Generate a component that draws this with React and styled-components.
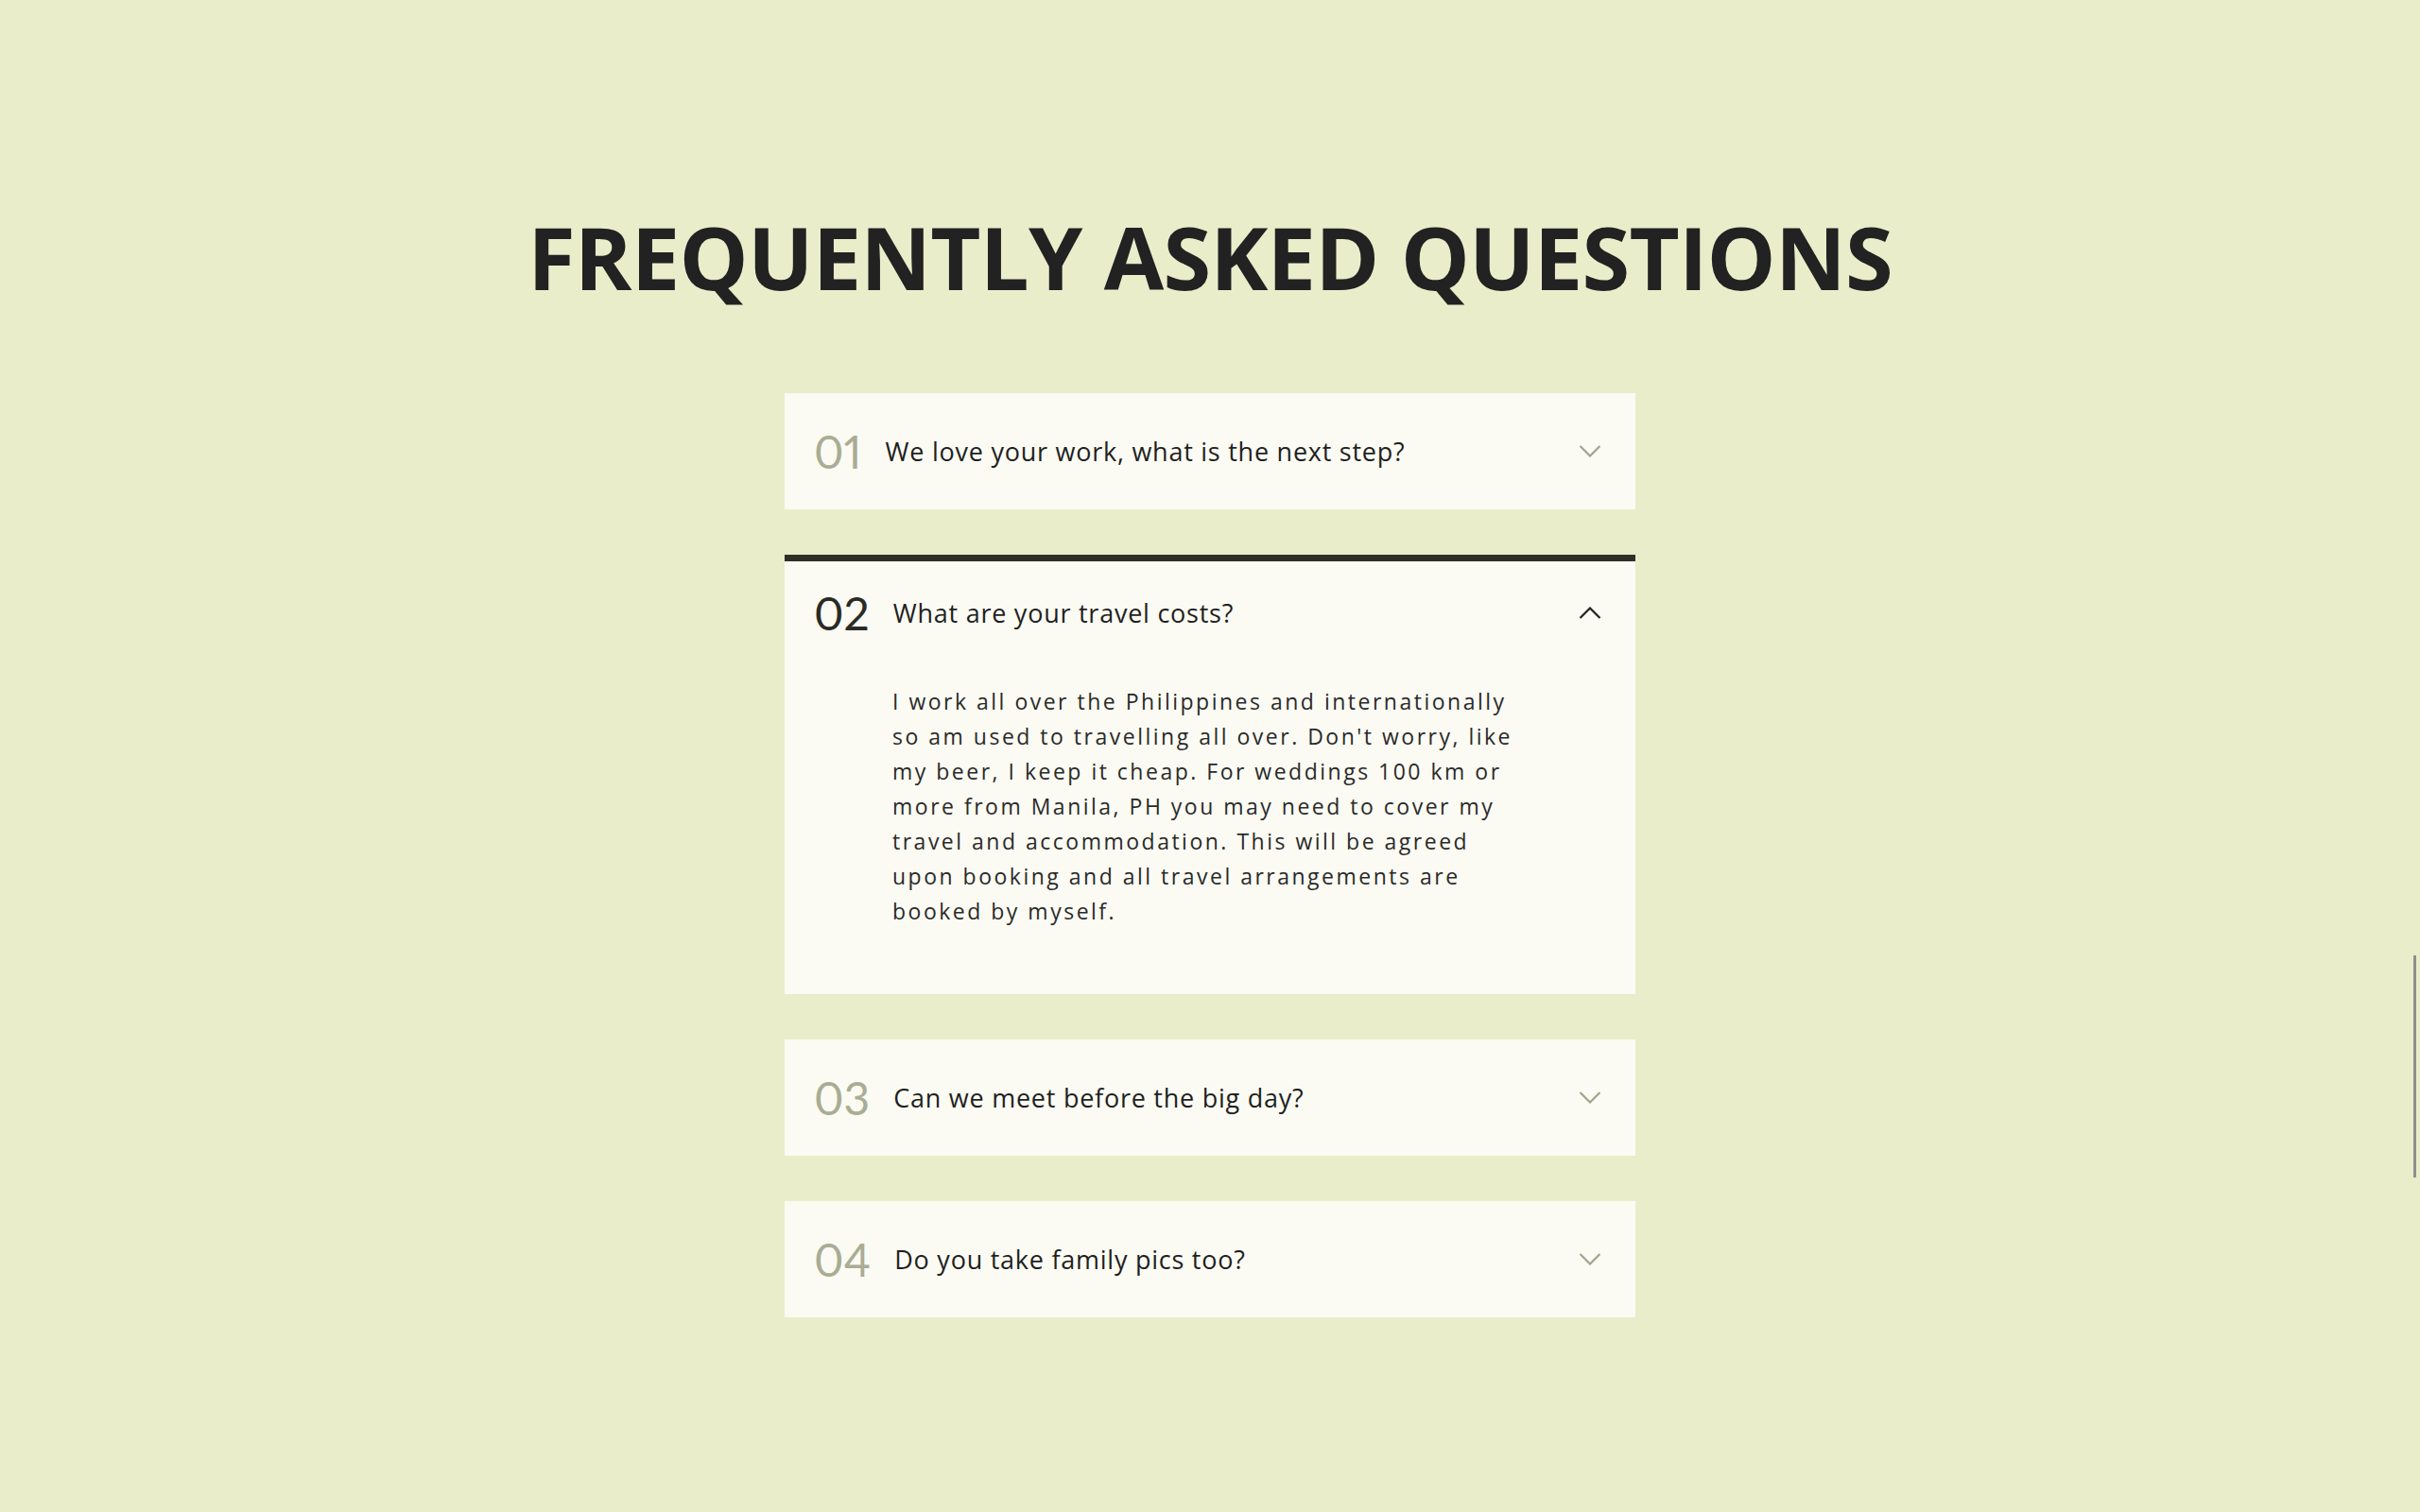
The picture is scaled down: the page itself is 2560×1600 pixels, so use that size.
import React, { useState } from 'react';
import styled, { createGlobalStyle } from 'styled-components';

const GlobalStyle = createGlobalStyle`
  html, body {
    margin: 0;
    padding: 0;
    background: #e9edca;
  }
  body {
    font-family: "Open Sans", "Noto Sans", sans-serif;
    color: #222222;
  }
  * {
    box-sizing: border-box;
  }
`;

const Page = styled.main`
  min-height: 100vh;
  padding: 217px 0 200px;
`;

const Title = styled.h1`
  margin: 0 0 89px;
  font-family: "Open Sans", sans-serif;
  font-weight: 700;
  font-size: 92px;
  line-height: 110px;
  letter-spacing: -0.8px;
  text-align: center;
  color: #222222;
`;

const List = styled.div`
  width: 900px;
  margin: 0 auto;
  display: flex;
  flex-direction: column;
  gap: 48px;
`;

const Card = styled.section`
  background: #fbfbf3;
  box-shadow: ${(p) => (p.open ? 'inset 0 7px 0 #2f2f27' : 'none')};
`;

const Header = styled.button`
  width: 100%;
  height: 123px;
  display: flex;
  align-items: center;
  padding: 0 36px 0 31px;
  border: 0;
  background: transparent;
  cursor: pointer;
  text-align: left;
`;

const Num = styled.span`
  font-family: Lato, "Liberation Sans", sans-serif;
  font-size: 48px;
  font-weight: 400;
  line-height: 1;
  font-variant-numeric: proportional-nums;
  margin-right: 25px;
  color: ${(p) => (p.open ? '#2b2b25' : '#a9ad94')};
`;

const Question = styled.span`
  font-family: "Open Sans", sans-serif;
  font-size: 27px;
  font-weight: 500;
  letter-spacing: 0.75px;
  color: #1f1f1f;
`;

const Chevron = styled.svg`
  margin-left: auto;
  width: 24px;
  height: 13px;
  flex: none;
`;

const Answer = styled.p`
  margin: 0;
  padding: 14px 0 69px 114px;
  max-width: 780px;
  font-family: "Open Sans", sans-serif;
  font-size: 23px;
  font-weight: 400;
  line-height: 37px;
  letter-spacing: 2.5px;
  color: #2a2a2a;
`;

const ScrollThumb = styled.div`
  position: fixed;
  right: 4px;
  top: 1011px;
  width: 3px;
  height: 235px;
  background: #8f8f8f;
`;

const faqs = [
  { q: 'We love your work, what is the next step?', a: '' },
  {
    q: 'What are your travel costs?',
    a: "I work all over the Philippines and internationally so am used to travelling all over. Don't worry, like my beer, I keep it cheap. For weddings 100 km or more from Manila, PH you may need to cover my travel and accommodation. This will be agreed upon booking and all travel arrangements are booked by myself.",
  },
  { q: 'Can we meet before the big day?', a: '' },
  { q: 'Do you take family pics too?', a: '' },
];

const Arrow = ({ open }) => (
  <Chevron viewBox="0 0 24 13" fill="none">
    <path
      d={open ? 'M1.5 12L12 1.5L22.5 12' : 'M1.5 1L12 11.5L22.5 1'}
      stroke={open ? '#222222' : '#a0a58c'}
      strokeWidth="2.2"
    />
  </Chevron>
);

export default function App() {
  const [openIndex, setOpenIndex] = useState(1);

  return (
    <>
      <GlobalStyle />
      <Page>
        <Title>FREQUENTLY ASKED QUESTIONS</Title>
        <List>
          {faqs.map((item, i) => {
            const open = i === openIndex;
            return (
              <Card key={item.q} open={open}>
                <Header onClick={() => setOpenIndex(open ? -1 : i)}>
                  <Num open={open}>{String(i + 1).padStart(2, '0')}</Num>
                  <Question>{item.q}</Question>
                  <Arrow open={open} />
                </Header>
                {open && <Answer>{item.a}</Answer>}
              </Card>
            );
          })}
        </List>
      </Page>
      <ScrollThumb />
    </>
  );
}
